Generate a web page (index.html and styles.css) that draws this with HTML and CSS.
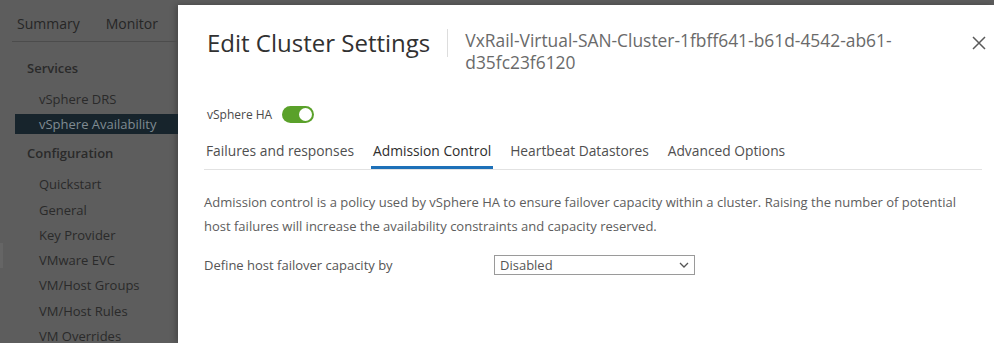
FILE: index.html
```html
<!DOCTYPE html>
<html lang="en">
<head>
    <meta charset="UTF-8">
    <title>Edit Cluster Settings</title>
    <link rel="stylesheet" href="styles.css">
</head>
<body>
    <div class="page">
        <aside class="nav">
            <div class="nav-tabs">
                <span>Summary</span>
                <span>Monitor</span>
            </div>
            <div class="nav-group">Services</div>
            <div class="nav-item">vSphere DRS</div>
            <div class="nav-item active">vSphere Availability</div>
            <div class="nav-group">Configuration</div>
            <div class="nav-item">Quickstart</div>
            <div class="nav-item">General</div>
            <div class="nav-item">Key Provider</div>
            <div class="nav-item">VMware EVC</div>
            <div class="nav-item">VM/Host Groups</div>
            <div class="nav-item">VM/Host Rules</div>
            <div class="nav-item">VM Overrides</div>
            <div class="edge-mark"></div>
        </aside>

        <div class="modal">
            <div class="modal-header">
                <h1 class="modal-title">Edit Cluster Settings</h1>
                <div class="modal-sub">VxRail-Virtual-SAN-Cluster-1fbff641-b61d-4542-ab61-<br>d35fc23f6120</div>
                <button class="close" aria-label="Close">
                    <svg width="14" height="14" viewBox="0 0 14 14">
                        <path d="M1 1 L13 13 M13 1 L1 13" stroke="#5a5a5a" stroke-width="1.5" fill="none"/>
                    </svg>
                </button>
            </div>

            <div class="ha-row">
                <span>vSphere HA</span>
                <span class="toggle"><span class="knob"></span></span>
            </div>

            <nav class="tabs">
                <span class="tab">Failures and responses</span>
                <span class="tab active">Admission Control</span>
                <span class="tab">Heartbeat Datastores</span>
                <span class="tab">Advanced Options</span>
            </nav>

            <p class="intro">Admission control is a policy used by vSphere HA to ensure failover capacity within a cluster. Raising the number of potential host failures will increase the availability constraints and capacity reserved.</p>

            <div class="field">
                <label class="field-label">Define host failover capacity by</label>
                <div class="select">
                    <span>Disabled</span>
                    <svg width="10" height="6" viewBox="0 0 10 6">
                        <path d="M1 1 L5 5 L9 1" stroke="#555" stroke-width="1.3" fill="none"/>
                    </svg>
                </div>
            </div>
        </div>
    </div>
</body>
</html>
```

FILE: styles.css
```css
html, body {
    margin: 0;
    height: 100%;
    overflow: hidden;
}

body {
    font-family: 'Open Sans', 'Liberation Sans', sans-serif;
    background-color: #5d5d5d; /* dimmed page behind the dialog */
}

.page {
    display: flex;
    height: 100%;
}

/* left navigation, seen through the overlay */
.nav {
    position: relative;
    width: 178px;
    flex-shrink: 0;
    padding-left: 12px;
    box-sizing: border-box;
    color: #2a2a2a;
    font-size: 13px;
}

.nav-tabs {
    display: flex;
    gap: 26px;
    padding: 14px 0 0 5px;
    height: 27px;
    border-bottom: 1px solid #4c4c4c;
    font-size: 14px;
    color: #262626;
}

.nav-group {
    padding-left: 15px;
    font-weight: 600;
    height: 25px;
    line-height: 25px;
}

.nav-tabs + .nav-group {
    margin-top: 14px;
}

.nav-item {
    padding-left: 27px;
    height: 25.3px;
    line-height: 25px;
}

.nav-group + .nav-item {
    margin-top: 6px;
}

.nav-item.active {
    margin-left: 3px;
    padding-left: 24px;
    height: 20px;
    line-height: 20px;
    margin-top: 2px;
    margin-bottom: 7px;
    background-color: #17242c;
    color: #7f8b92;
}

.edge-mark {
    position: absolute;
    left: 0;
    top: 243px;
    width: 3px;
    height: 25px;
    background-color: #656565;
}

/* dialog */
.modal {
    flex: 1;
    margin-top: 5px;
    background-color: #ffffff;
    box-shadow: -2px 0 6px rgba(0, 0, 0, 0.25);
    padding: 0 8px 0 26px;
    color: #565656;
}

.modal-header {
    display: flex;
    align-items: flex-start;
    padding-top: 24px;
    height: 60px;
}

.modal-title {
    margin: 0;
    padding: 0 17px 0 3px;
    font-size: 24px;
    font-weight: 400;
    color: #313131;
    line-height: 28px;
    border-right: 1px solid #dddddd;
}

.modal-sub {
    flex: 1;
    padding-left: 17px;
    font-size: 17.4px;
    line-height: 22px;
    color: #6a6a6a;
}

.close {
    border: none;
    background: none;
    padding: 0;
    margin: 7px 0 0 0;
    cursor: pointer;
}

.ha-row {
    display: flex;
    align-items: center;
    gap: 10px;
    margin-top: 17px;
    padding-left: 3px;
    font-size: 12px;
    color: #4a4a4a;
}

.toggle {
    position: relative;
    width: 32px;
    height: 17px;
    border-radius: 9px;
    background-color: #5aa12a;
}

.knob {
    position: absolute;
    right: 2px;
    top: 2px;
    width: 13px;
    height: 13px;
    border-radius: 50%;
    background-color: #ffffff;
}

.tabs {
    display: flex;
    gap: 15px;
    margin: 17px 4px 0 0;
    border-bottom: 1px solid #e2e2e2;
    font-size: 13.8px;
    color: #4f4f4f;
}

.tab {
    padding: 0 2px;
    height: 29px;
    line-height: 22px;
}

.tab.active {
    color: #2e2e2e;
    border-bottom: 3px solid #1d70b8;
    height: 26px;
}

.intro {
    margin: 20px 28px 0 0;
    font-size: 13px;
    line-height: 24px;
    color: #5d5d5d;
}

.field {
    display: flex;
    align-items: center;
    margin-top: 17px;
    font-size: 13px;
}

.field-label {
    width: 290px;
    color: #555555;
}

.select {
    display: flex;
    align-items: center;
    justify-content: space-between;
    width: 201px;
    height: 20px;
    box-sizing: border-box;
    padding: 0 5px 0 5px;
    border: 1px solid #9a9a9a;
    color: #555555;
}
```
